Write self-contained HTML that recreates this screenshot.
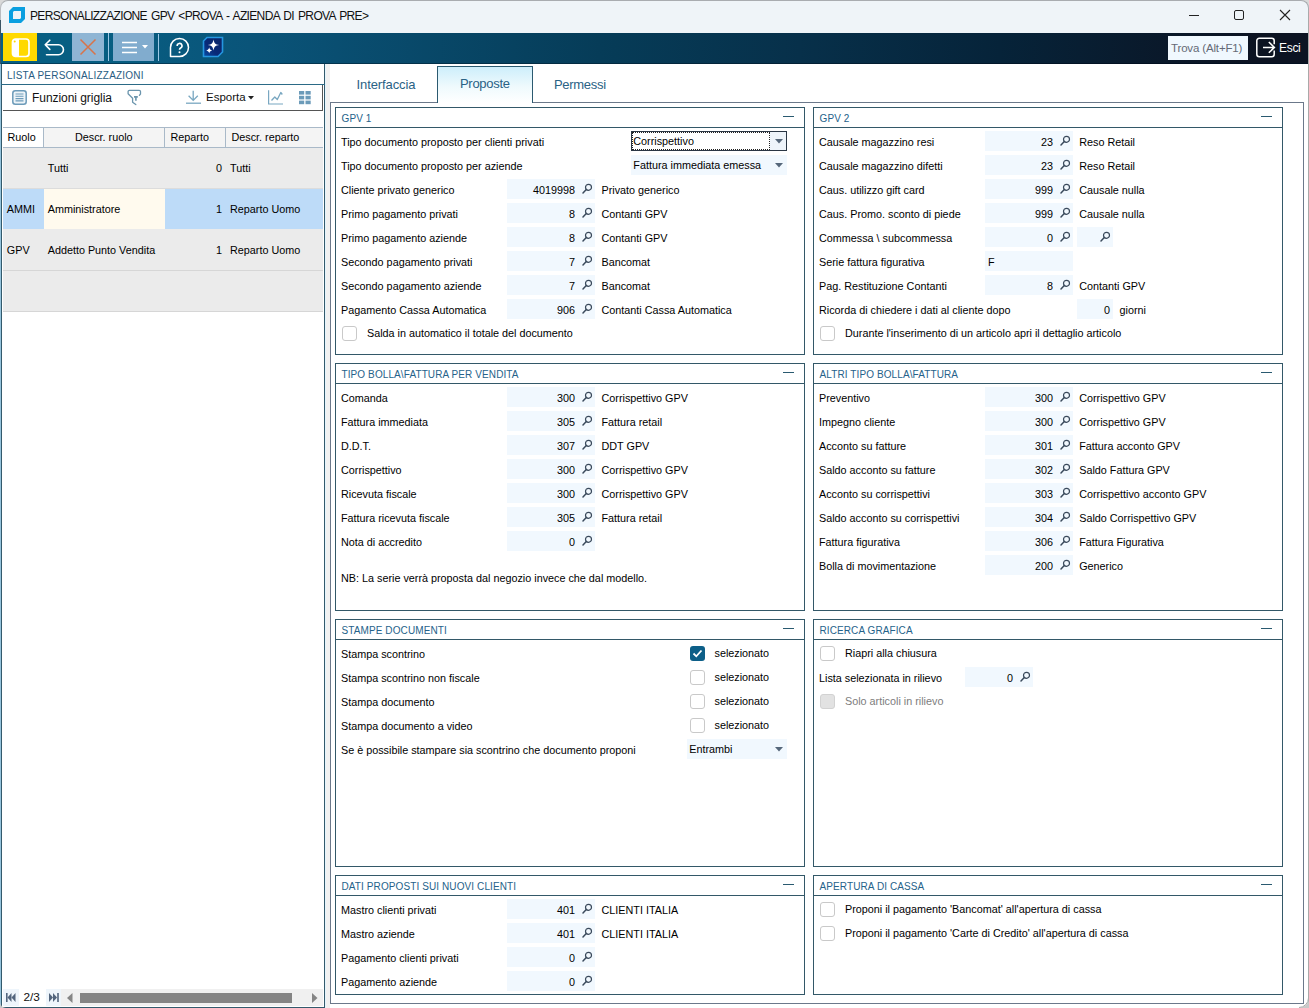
<!DOCTYPE html><html><head><meta charset="utf-8"><style>
html,body{margin:0;padding:0;}
body{width:1309px;height:1008px;position:relative;overflow:hidden;background:#fff;font-family:"Liberation Sans",sans-serif;}
.a{position:absolute;}
.t{position:absolute;white-space:nowrap;}
svg.a{overflow:visible;}
</style></head><body>
<div class="a" style="left:0px;top:0px;width:1309px;height:12px;background:#d9d9d9;"></div>
<div class="a" style="left:0px;top:0px;width:1309px;height:33px;box-sizing:border-box;background:#eff4f8;border-top:1px solid #a9acb0;border-right:1px solid #a9acb0;border-left:1px solid #b9bcc0;border-radius:8px 8px 0 0;"></div>
<svg class="a" style="left:9px;top:7px;" width="16" height="16" viewBox="0 0 16 16"><path d="M4,0 H16 V12 L12,16 H0 V4 Z M5,4 H12 V11 L11,12 H4 V5 Z" fill="#0a9fe0" fill-rule="evenodd"/></svg>
<div class="t" style="left:30px;top:9.84px;font-size:12px;line-height:12px;color:#111;letter-spacing:-0.65px;word-spacing:1.3px;">PERSONALIZZAZIONE GPV &lt;PROVA - AZIENDA DI PROVA PRE&gt;</div>
<div class="a" style="left:1189px;top:15px;width:10px;height:1px;background:#222;"></div>
<div class="a" style="left:1234px;top:10px;width:10px;height:10px;box-sizing:border-box;border:1px solid #222;border-radius:2px;"></div>
<svg class="a" style="left:1280px;top:10px;" width="10" height="10" viewBox="0 0 10 10"><path d="M0,0 L10,10 M10,0 L0,10" stroke="#222" stroke-width="1.1"/></svg>
<div class="a" style="left:0px;top:33px;width:1309px;height:31px;background:linear-gradient(90deg,#075e82 0px,#075e82 100px,#0a5479 250px,#063c58 600px,#07304a 800px,#062339 1000px,#0c1322 1254px,#0c1322 1309px);"></div>
<div class="a" style="left:0px;top:63px;width:1309px;height:1px;background:linear-gradient(90deg,#04405e 0px,#032a40 600px,#020f20 1150px);"></div>
<div class="a" style="left:3px;top:33px;width:34px;height:28px;background:#ffd900;"></div>
<svg class="a" style="left:11px;top:38px;" width="19" height="20" viewBox="0 0 19 20"><rect x="1.5" y="1" width="16.5" height="17.5" rx="3" fill="none" stroke="#fff" stroke-width="1.7"/><path d="M4,1 H8 V18.5 H4 A2.5,2.5 0 0 1 1.5,16 V3.5 A2.5,2.5 0 0 1 4,1 Z" fill="#fff"/><circle cx="3.7" cy="3.5" r="1" fill="#ffd900"/></svg>
<svg class="a" style="left:44px;top:39px;" width="21" height="18" viewBox="0 0 21 18"><path d="M5.8,1.2 L1.2,5.8 L5.8,10.4 M1.2,5.8 H14.5 A4.95,4.95 0 0 1 14.5,15.7 H2.5" fill="none" stroke="#fff" stroke-width="1.6" stroke-linejoin="round" stroke-linecap="round"/></svg>
<div class="a" style="left:72px;top:33px;width:32px;height:28px;background:#8fb5d4;"></div>
<svg class="a" style="left:80px;top:39px;" width="16" height="16" viewBox="0 0 16 16"><path d="M0.5,0.5 L15.5,15.5 M15.5,0.5 L0.5,15.5" stroke="#d8744a" stroke-width="1.5"/></svg>
<div class="a" style="left:108px;top:33px;width:1px;height:28px;background:#9cc8e6;"></div>
<div class="a" style="left:113px;top:33px;width:41px;height:28px;background:#81acce;"></div>
<svg class="a" style="left:121px;top:41px;" width="17" height="13" viewBox="0 0 17 13"><path d="M1,1.5 H16 M1,6.5 H16 M1,11.5 H16" stroke="#fff" stroke-width="1.4"/></svg>
<svg class="a" style="left:142px;top:45px;" width="6" height="4" viewBox="0 0 6 4"><polygon points="0,0 6,0 3,3.5" fill="#fff"/></svg>
<div class="a" style="left:158px;top:34px;width:1px;height:27px;background:#9cc8e6;"></div>
<svg class="a" style="left:169px;top:37px;" width="21" height="21" viewBox="0 0 21 21"><path d="M1.5,19.5 L1.5,10.5 A9,9 0 1 1 10.5,19.5 Z" fill="none" stroke="#fff" stroke-width="1.5" stroke-linejoin="round"/><path d="M8.2,9 A2.4,2.4 0 1 1 11.6,11 C10.9,11.4 10.5,11.8 10.5,12.8" fill="none" stroke="#fff" stroke-width="1.6"/><circle cx="10.5" cy="15.3" r="1" fill="#fff"/></svg>
<svg class="a" style="left:202px;top:36px;" width="22" height="22" viewBox="0 0 22 22"><defs><linearGradient id="ai" x1="1" y1="0" x2="0" y2="1"><stop offset="0" stop-color="#0b2466"/><stop offset="0.6" stop-color="#082a78"/><stop offset="1" stop-color="#0a4ea6"/></linearGradient></defs><path d="M5,1.5 H20.5 V16 L16,20.5 H1.5 V5 Z" fill="url(#ai)" stroke="#2596e0" stroke-width="1.6"/><path d="M11.5,3.5 C12.2,7.3 13.2,8.3 17.2,9 C13.2,9.7 12.2,10.7 11.5,14.5 C10.8,10.7 9.8,9.7 5.8,9 C9.8,8.3 10.8,7.3 11.5,3.5 Z" fill="#fff"/><path d="M7.2,11.3 C7.6,13.3 8.2,13.8 10.2,14.4 C8.2,15 7.6,15.5 7.2,17.5 C6.8,15.5 6.2,15 4.2,14.4 C6.2,13.8 6.8,13.3 7.2,11.3 Z" fill="#fff"/></svg>
<div class="a" style="left:1168px;top:36px;width:80px;height:24px;background:#f0f8fe;"></div>
<div class="t" style="left:1171px;top:42.67px;font-size:11.5px;line-height:11.5px;color:#656a76;letter-spacing:-0.15px;">Trova (Alt+F1)</div>
<svg class="a" style="left:1256px;top:37px;" width="21" height="21" viewBox="0 0 21 21"><path d="M18.2,7.3 V3.8 A2.5,2.5 0 0 0 15.7,1.3 H3.3 A2.5,2.5 0 0 0 0.8,3.8 V17.2 A2.5,2.5 0 0 0 3.3,19.7 H15.7 A2.5,2.5 0 0 0 18.2,17.2 V13.6" fill="none" stroke="#fff" stroke-width="1.5"/><path d="M7,10.4 H18.4 M12.8,5 L18.4,10.4 L12.8,15.8" fill="none" stroke="#fff" stroke-width="1.5" stroke-linejoin="miter"/></svg>
<div class="t" style="left:1279px;top:41.64px;font-size:12px;line-height:12px;color:#fff;letter-spacing:-0.3px;">Esci</div>
<div class="a" style="left:1px;top:64px;width:324px;height:944px;box-sizing:border-box;border:1px solid #335a6c;border-top:none;background:#fff;"></div>
<div class="t" style="left:7px;top:70.53px;font-size:10px;line-height:10px;color:#285c82;letter-spacing:0.2px;">LISTA PERSONALIZZAZIONI</div>
<div class="a" style="left:1px;top:84px;width:324px;height:1px;background:#2b6a86;"></div>
<div class="a" style="left:3px;top:85px;width:320px;height:26px;box-sizing:border-box;border-right:1px solid #555;border-bottom:1px solid #555;background:#fff;"></div>
<svg class="a" style="left:12px;top:90px;" width="15" height="15" viewBox="0 0 15 15"><rect x="0.8" y="0.8" width="13.4" height="13.4" rx="2.5" fill="#eef4f8" stroke="#6c9bb9" stroke-width="1.5"/><path d="M3.5,4 H11.5 M3.5,6.3 H11.5 M3.5,8.6 H11.5 M3.5,10.9 H11.5" stroke="#6c9bb9" stroke-width="1.1"/></svg>
<div class="t" style="left:32px;top:91.54px;font-size:12px;line-height:12px;color:#111;letter-spacing:-0.05px;">Funzioni griglia</div>
<svg class="a" style="left:122px;top:86px;" width="24" height="22" viewBox="0 0 24 22"><path d="M17.4,9.3 L18.5,8 V5.6 A1.3,1.3 0 0 0 17.2,4.3 H7.4 A1.3,1.3 0 0 0 6.1,5.6 V7.8 L10.6,12.3 V16.2 L13.8,18.5" fill="none" stroke="#6b95ad" stroke-width="1.3" stroke-linejoin="round" stroke-linecap="round"/><path d="M12,10.9 H15.8 M13.9,10.9 V14.8" stroke="#6b95ad" stroke-width="1.6"/></svg>
<svg class="a" style="left:186px;top:90px;" width="16" height="15" viewBox="0 0 16 15"><path d="M7.2,0.8 V10.4 M2.6,5.8 L7.2,10.4 L11.8,5.8" fill="none" stroke="#79a7c1" stroke-width="1.3"/><path d="M0,13.2 H15" stroke="#79a7c1" stroke-width="1.3"/></svg>
<div class="t" style="left:206px;top:91.97px;font-size:11.5px;line-height:11.5px;color:#111;">Esporta</div>
<svg class="a" style="left:248px;top:96px;" width="6" height="4" viewBox="0 0 6 4"><polygon points="0,0 6,0 3,3.5" fill="#222"/></svg>
<svg class="a" style="left:268px;top:90px;" width="16" height="15" viewBox="0 0 16 15"><path d="M0.6,0.3 V14 H15" fill="none" stroke="#79a7c1" stroke-width="1.2"/><path d="M3.5,10.5 L6.8,7 L9.3,9.5 L12.8,2.5 L14.3,4.5" fill="none" stroke="#79a7c1" stroke-width="1.3" stroke-linejoin="round"/></svg>
<svg class="a" style="left:299px;top:91px;" width="13" height="14" viewBox="0 0 13 14"><g fill="#6c9bb9"><rect x="0" y="0" width="5.2" height="3.6"/><rect x="6.5" y="0" width="5.2" height="3.6"/><rect x="0" y="4.8" width="5.2" height="3.6"/><rect x="6.5" y="4.8" width="5.2" height="3.6"/><rect x="0" y="9.6" width="5.2" height="3.6"/><rect x="6.5" y="9.6" width="5.2" height="3.6"/></g></svg>
<div class="a" style="left:3px;top:127px;width:320px;height:1px;background:#a9b9c8;"></div>
<div class="a" style="left:3px;top:128px;width:320px;height:19px;background:#f4f4f4;"></div>
<div class="a" style="left:3px;top:128px;width:40px;height:19px;background:#fff;"></div>
<div class="a" style="left:3px;top:147px;width:320px;height:1px;background:#a9b9c8;"></div>
<div class="a" style="left:43px;top:128px;width:1px;height:19px;background:#a9b9c8;"></div>
<div class="a" style="left:164px;top:128px;width:1px;height:19px;background:#a9b9c8;"></div>
<div class="a" style="left:225px;top:128px;width:1px;height:19px;background:#a9b9c8;"></div>
<div class="t" style="left:7.5px;top:132.26px;font-size:10.8px;line-height:10.8px;color:#000;">Ruolo</div>
<div class="t" style="left:75px;top:132.26px;font-size:10.8px;line-height:10.8px;color:#000;">Descr. ruolo</div>
<div class="t" style="left:170.5px;top:132.26px;font-size:10.8px;line-height:10.8px;color:#000;">Reparto</div>
<div class="t" style="left:231.5px;top:132.26px;font-size:10.8px;line-height:10.8px;color:#000;">Descr. reparto</div>
<div class="a" style="left:3px;top:148px;width:320px;height:163px;background:#ebebeb;"></div>
<div class="a" style="left:3px;top:188px;width:320px;height:1px;background:#dcdcdc;"></div>
<div class="a" style="left:3px;top:189px;width:320px;height:40px;background:#bddbf8;"></div>
<div class="a" style="left:44px;top:189px;width:121px;height:40px;background:#fffaee;"></div>
<div class="a" style="left:3px;top:270px;width:320px;height:1px;background:#d6d6d6;"></div>
<div class="a" style="left:3px;top:311px;width:320px;height:1px;background:#d6d6d6;"></div>
<div class="t" style="left:47.7px;top:163.46px;font-size:10.8px;line-height:10.8px;color:#000;">Tutti</div>
<div class="t" style="right:1087px;top:163.46px;font-size:10.8px;line-height:10.8px;color:#000;">0</div>
<div class="t" style="left:230px;top:163.46px;font-size:10.8px;line-height:10.8px;color:#000;">Tutti</div>
<div class="t" style="left:6.8px;top:204.46px;font-size:10.8px;line-height:10.8px;color:#000;">AMMI</div>
<div class="t" style="left:47.7px;top:204.46px;font-size:10.8px;line-height:10.8px;color:#000;">Amministratore</div>
<div class="t" style="right:1087px;top:204.46px;font-size:10.8px;line-height:10.8px;color:#000;">1</div>
<div class="t" style="left:230px;top:204.46px;font-size:10.8px;line-height:10.8px;color:#000;">Reparto Uomo</div>
<div class="t" style="left:6.8px;top:245.46px;font-size:10.8px;line-height:10.8px;color:#000;">GPV</div>
<div class="t" style="left:47.7px;top:245.46px;font-size:10.8px;line-height:10.8px;color:#000;">Addetto Punto Vendita</div>
<div class="t" style="right:1087px;top:245.46px;font-size:10.8px;line-height:10.8px;color:#000;">1</div>
<div class="t" style="left:230px;top:245.46px;font-size:10.8px;line-height:10.8px;color:#000;">Reparto Uomo</div>
<div class="a" style="left:3px;top:989px;width:16px;height:17px;background:#eef5fb;"></div>
<svg class="a" style="left:6px;top:993px;" width="10" height="9" viewBox="0 0 10 9"><rect x="0" y="0" width="1.6" height="9" fill="#53657d"/><polygon points="5.5,0 1.5,4.5 5.5,9" fill="#53657d"/><polygon points="9.5,0 5.5,4.5 9.5,9" fill="#53657d"/></svg>
<div class="t" style="left:23.5px;top:992.31px;font-size:11.8px;line-height:11.8px;color:#111;">2/3</div>
<div class="a" style="left:46px;top:989px;width:15px;height:17px;background:#eef5fb;"></div>
<svg class="a" style="left:49px;top:993px;" width="10" height="9" viewBox="0 0 10 9"><polygon points="0,0 4,4.5 0,9" fill="#53657d"/><polygon points="4,0 8,4.5 4,9" fill="#53657d"/><rect x="8.2" y="0" width="1.6" height="9" fill="#53657d"/></svg>
<div class="a" style="left:61px;top:989px;width:262px;height:17px;background:#f0f0f0;"></div>
<svg class="a" style="left:67px;top:993px;" width="6" height="10" viewBox="0 0 6 10"><polygon points="5.5,0 0,5 5.5,10" fill="#858585"/></svg>
<div class="a" style="left:80px;top:993px;width:212px;height:10px;background:#848484;"></div>
<svg class="a" style="left:312px;top:993px;" width="6" height="10" viewBox="0 0 6 10"><polygon points="0,0 5.5,5 0,10" fill="#858585"/></svg>
<div class="a" style="left:1px;top:1007px;width:324px;height:1px;background:#335a6c;"></div>
<div class="a" style="left:325px;top:64px;width:5px;height:944px;background:#f1f1f1;"></div>
<div class="a" style="left:325px;top:64px;width:1px;height:944px;background:#e4f4fc;"></div>
<div class="a" style="left:330px;top:102px;width:974px;height:902px;box-sizing:border-box;border:1px solid #6b788a;background:#fff;"></div>
<div class="t" style="left:356.5px;top:78.00px;font-size:13px;line-height:13px;color:#2a6285;letter-spacing:-0.1px;">Interfaccia</div>
<div class="a" style="left:437px;top:66px;width:96px;height:37px;box-sizing:border-box;border:1px solid #2b5a70;border-bottom:none;background:linear-gradient(180deg,#cdeefb 0%,#effafd 55%,#fff 100%);"></div>
<div class="t" style="left:460px;top:76.70px;font-size:13px;line-height:13px;color:#2a6285;letter-spacing:-0.3px;">Proposte</div>
<div class="t" style="left:554px;top:78.00px;font-size:13px;line-height:13px;color:#2a6285;letter-spacing:-0.3px;">Permessi</div>
<div class="a" style="left:335px;top:107px;width:470px;height:248px;box-sizing:border-box;border:1px solid #335868;background:#fff;"></div>
<div class="a" style="left:335px;top:127px;width:470px;height:1px;background:#335868;"></div>
<div class="t" style="left:341.5px;top:114.33px;font-size:10px;line-height:10px;color:#25628a;letter-spacing:0.1px;">GPV 1</div>
<div class="a" style="left:783px;top:116px;width:11px;height:1.3px;background:#2a5a70;"></div>
<div class="t" style="left:341px;top:137.06px;font-size:10.8px;line-height:10.8px;color:#000;">Tipo documento proposto per clienti privati</div>
<div class="a" style="left:631px;top:131px;width:156px;height:20px;box-sizing:border-box;border:1px solid #2a3644;background:#fff;"></div>
<div class="a" style="left:770px;top:132px;width:16px;height:18px;background:#eef4fa;"></div>
<div class="a" style="left:632px;top:132px;width:138px;height:18px;box-sizing:border-box;border:1px dotted #222;"></div>
<svg class="a" style="left:775px;top:139px;" width="8" height="5" viewBox="0 0 8 5"><polygon points="0,0 8,0 4,4.5" fill="#56677a"/></svg>
<div class="t" style="left:633.3px;top:135.66px;font-size:10.8px;line-height:10.8px;color:#000;">Corrispettivo</div>
<div class="t" style="left:341px;top:161.06px;font-size:10.8px;line-height:10.8px;color:#000;">Tipo documento proposto per aziende</div>
<div class="a" style="left:631px;top:155px;width:156px;height:20px;background:#f1f8fe;"></div>
<svg class="a" style="left:775px;top:163px;" width="8" height="5" viewBox="0 0 8 5"><polygon points="0,0 8,0 4,4.5" fill="#56677a"/></svg>
<div class="t" style="left:633.3px;top:159.66px;font-size:10.8px;line-height:10.8px;color:#000;">Fattura immediata emessa</div>
<div class="t" style="left:341px;top:185.06px;font-size:10.8px;line-height:10.8px;color:#000;">Cliente privato generico</div>
<div class="a" style="left:507px;top:179px;width:88px;height:20px;background:#f1f8fe;"></div>
<svg class="a" style="left:582px;top:183px;" width="11" height="11" viewBox="0 0 11 11"><circle cx="6.5" cy="4.3" r="3.0" fill="none" stroke="#3a4a5c" stroke-width="1.2"/><line x1="4.3" y1="6.6" x2="1" y2="10" stroke="#3a4a5c" stroke-width="1.5" stroke-linecap="round"/></svg>
<div class="t" style="right:734px;top:185.06px;font-size:10.8px;line-height:10.8px;color:#000;">4019998</div>
<div class="t" style="left:601.5px;top:185.06px;font-size:10.8px;line-height:10.8px;color:#000;">Privato generico</div>
<div class="t" style="left:341px;top:209.06px;font-size:10.8px;line-height:10.8px;color:#000;">Primo pagamento privati</div>
<div class="a" style="left:507px;top:203px;width:88px;height:20px;background:#f1f8fe;"></div>
<svg class="a" style="left:582px;top:207px;" width="11" height="11" viewBox="0 0 11 11"><circle cx="6.5" cy="4.3" r="3.0" fill="none" stroke="#3a4a5c" stroke-width="1.2"/><line x1="4.3" y1="6.6" x2="1" y2="10" stroke="#3a4a5c" stroke-width="1.5" stroke-linecap="round"/></svg>
<div class="t" style="right:734px;top:209.06px;font-size:10.8px;line-height:10.8px;color:#000;">8</div>
<div class="t" style="left:601.5px;top:209.06px;font-size:10.8px;line-height:10.8px;color:#000;">Contanti GPV</div>
<div class="t" style="left:341px;top:233.06px;font-size:10.8px;line-height:10.8px;color:#000;">Primo pagamento aziende</div>
<div class="a" style="left:507px;top:227px;width:88px;height:20px;background:#f1f8fe;"></div>
<svg class="a" style="left:582px;top:231px;" width="11" height="11" viewBox="0 0 11 11"><circle cx="6.5" cy="4.3" r="3.0" fill="none" stroke="#3a4a5c" stroke-width="1.2"/><line x1="4.3" y1="6.6" x2="1" y2="10" stroke="#3a4a5c" stroke-width="1.5" stroke-linecap="round"/></svg>
<div class="t" style="right:734px;top:233.06px;font-size:10.8px;line-height:10.8px;color:#000;">8</div>
<div class="t" style="left:601.5px;top:233.06px;font-size:10.8px;line-height:10.8px;color:#000;">Contanti GPV</div>
<div class="t" style="left:341px;top:257.06px;font-size:10.8px;line-height:10.8px;color:#000;">Secondo pagamento privati</div>
<div class="a" style="left:507px;top:251px;width:88px;height:20px;background:#f1f8fe;"></div>
<svg class="a" style="left:582px;top:255px;" width="11" height="11" viewBox="0 0 11 11"><circle cx="6.5" cy="4.3" r="3.0" fill="none" stroke="#3a4a5c" stroke-width="1.2"/><line x1="4.3" y1="6.6" x2="1" y2="10" stroke="#3a4a5c" stroke-width="1.5" stroke-linecap="round"/></svg>
<div class="t" style="right:734px;top:257.06px;font-size:10.8px;line-height:10.8px;color:#000;">7</div>
<div class="t" style="left:601.5px;top:257.06px;font-size:10.8px;line-height:10.8px;color:#000;">Bancomat</div>
<div class="t" style="left:341px;top:281.06px;font-size:10.8px;line-height:10.8px;color:#000;">Secondo pagamento aziende</div>
<div class="a" style="left:507px;top:275px;width:88px;height:20px;background:#f1f8fe;"></div>
<svg class="a" style="left:582px;top:279px;" width="11" height="11" viewBox="0 0 11 11"><circle cx="6.5" cy="4.3" r="3.0" fill="none" stroke="#3a4a5c" stroke-width="1.2"/><line x1="4.3" y1="6.6" x2="1" y2="10" stroke="#3a4a5c" stroke-width="1.5" stroke-linecap="round"/></svg>
<div class="t" style="right:734px;top:281.06px;font-size:10.8px;line-height:10.8px;color:#000;">7</div>
<div class="t" style="left:601.5px;top:281.06px;font-size:10.8px;line-height:10.8px;color:#000;">Bancomat</div>
<div class="t" style="left:341px;top:305.06px;font-size:10.8px;line-height:10.8px;color:#000;">Pagamento Cassa Automatica</div>
<div class="a" style="left:507px;top:299px;width:88px;height:20px;background:#f1f8fe;"></div>
<svg class="a" style="left:582px;top:303px;" width="11" height="11" viewBox="0 0 11 11"><circle cx="6.5" cy="4.3" r="3.0" fill="none" stroke="#3a4a5c" stroke-width="1.2"/><line x1="4.3" y1="6.6" x2="1" y2="10" stroke="#3a4a5c" stroke-width="1.5" stroke-linecap="round"/></svg>
<div class="t" style="right:734px;top:305.06px;font-size:10.8px;line-height:10.8px;color:#000;">906</div>
<div class="t" style="left:601.5px;top:305.06px;font-size:10.8px;line-height:10.8px;color:#000;">Contanti Cassa Automatica</div>
<div class="a" style="left:342px;top:326px;width:15px;height:15px;box-sizing:border-box;border:1.6px solid #c9c9c9;border-radius:3px;background:#fff;"></div>
<div class="t" style="left:367px;top:328.46px;font-size:10.8px;line-height:10.8px;color:#000;">Salda in automatico il totale del documento</div>
<div class="a" style="left:813px;top:107px;width:470px;height:248px;box-sizing:border-box;border:1px solid #335868;background:#fff;"></div>
<div class="a" style="left:813px;top:127px;width:470px;height:1px;background:#335868;"></div>
<div class="t" style="left:819.5px;top:114.33px;font-size:10px;line-height:10px;color:#25628a;letter-spacing:0.1px;">GPV 2</div>
<div class="a" style="left:1261px;top:116px;width:11px;height:1.3px;background:#2a5a70;"></div>
<div class="t" style="left:819px;top:137.06px;font-size:10.8px;line-height:10.8px;color:#000;">Causale magazzino resi</div>
<div class="a" style="left:985px;top:131px;width:88px;height:20px;background:#f1f8fe;"></div>
<svg class="a" style="left:1060px;top:135px;" width="11" height="11" viewBox="0 0 11 11"><circle cx="6.5" cy="4.3" r="3.0" fill="none" stroke="#3a4a5c" stroke-width="1.2"/><line x1="4.3" y1="6.6" x2="1" y2="10" stroke="#3a4a5c" stroke-width="1.5" stroke-linecap="round"/></svg>
<div class="t" style="right:256px;top:137.06px;font-size:10.8px;line-height:10.8px;color:#000;">23</div>
<div class="t" style="left:1079.2px;top:137.06px;font-size:10.8px;line-height:10.8px;color:#000;">Reso Retail</div>
<div class="t" style="left:819px;top:161.06px;font-size:10.8px;line-height:10.8px;color:#000;">Causale magazzino difetti</div>
<div class="a" style="left:985px;top:155px;width:88px;height:20px;background:#f1f8fe;"></div>
<svg class="a" style="left:1060px;top:159px;" width="11" height="11" viewBox="0 0 11 11"><circle cx="6.5" cy="4.3" r="3.0" fill="none" stroke="#3a4a5c" stroke-width="1.2"/><line x1="4.3" y1="6.6" x2="1" y2="10" stroke="#3a4a5c" stroke-width="1.5" stroke-linecap="round"/></svg>
<div class="t" style="right:256px;top:161.06px;font-size:10.8px;line-height:10.8px;color:#000;">23</div>
<div class="t" style="left:1079.2px;top:161.06px;font-size:10.8px;line-height:10.8px;color:#000;">Reso Retail</div>
<div class="t" style="left:819px;top:185.06px;font-size:10.8px;line-height:10.8px;color:#000;">Caus. utilizzo gift card</div>
<div class="a" style="left:985px;top:179px;width:88px;height:20px;background:#f1f8fe;"></div>
<svg class="a" style="left:1060px;top:183px;" width="11" height="11" viewBox="0 0 11 11"><circle cx="6.5" cy="4.3" r="3.0" fill="none" stroke="#3a4a5c" stroke-width="1.2"/><line x1="4.3" y1="6.6" x2="1" y2="10" stroke="#3a4a5c" stroke-width="1.5" stroke-linecap="round"/></svg>
<div class="t" style="right:256px;top:185.06px;font-size:10.8px;line-height:10.8px;color:#000;">999</div>
<div class="t" style="left:1079.2px;top:185.06px;font-size:10.8px;line-height:10.8px;color:#000;">Causale nulla</div>
<div class="t" style="left:819px;top:209.06px;font-size:10.8px;line-height:10.8px;color:#000;">Caus. Promo. sconto di piede</div>
<div class="a" style="left:985px;top:203px;width:88px;height:20px;background:#f1f8fe;"></div>
<svg class="a" style="left:1060px;top:207px;" width="11" height="11" viewBox="0 0 11 11"><circle cx="6.5" cy="4.3" r="3.0" fill="none" stroke="#3a4a5c" stroke-width="1.2"/><line x1="4.3" y1="6.6" x2="1" y2="10" stroke="#3a4a5c" stroke-width="1.5" stroke-linecap="round"/></svg>
<div class="t" style="right:256px;top:209.06px;font-size:10.8px;line-height:10.8px;color:#000;">999</div>
<div class="t" style="left:1079.2px;top:209.06px;font-size:10.8px;line-height:10.8px;color:#000;">Causale nulla</div>
<div class="t" style="left:819px;top:233.06px;font-size:10.8px;line-height:10.8px;color:#000;">Commessa \ subcommessa</div>
<div class="a" style="left:985px;top:227px;width:88px;height:20px;background:#f1f8fe;"></div>
<svg class="a" style="left:1060px;top:231px;" width="11" height="11" viewBox="0 0 11 11"><circle cx="6.5" cy="4.3" r="3.0" fill="none" stroke="#3a4a5c" stroke-width="1.2"/><line x1="4.3" y1="6.6" x2="1" y2="10" stroke="#3a4a5c" stroke-width="1.5" stroke-linecap="round"/></svg>
<div class="t" style="right:256px;top:233.06px;font-size:10.8px;line-height:10.8px;color:#000;">0</div>
<div class="a" style="left:1077px;top:227px;width:36px;height:20px;background:#f1f8fe;"></div>
<svg class="a" style="left:1100px;top:231px;" width="11" height="11" viewBox="0 0 11 11"><circle cx="6.5" cy="4.3" r="3.0" fill="none" stroke="#3a4a5c" stroke-width="1.2"/><line x1="4.3" y1="6.6" x2="1" y2="10" stroke="#3a4a5c" stroke-width="1.5" stroke-linecap="round"/></svg>
<div class="t" style="left:819px;top:257.06px;font-size:10.8px;line-height:10.8px;color:#000;">Serie fattura figurativa</div>
<div class="a" style="left:985px;top:251px;width:88px;height:20px;background:#f1f8fe;"></div>
<div class="t" style="left:988px;top:257.06px;font-size:10.8px;line-height:10.8px;color:#000;">F</div>
<div class="t" style="left:819px;top:281.06px;font-size:10.8px;line-height:10.8px;color:#000;">Pag. Restituzione Contanti</div>
<div class="a" style="left:985px;top:275px;width:88px;height:20px;background:#f1f8fe;"></div>
<svg class="a" style="left:1060px;top:279px;" width="11" height="11" viewBox="0 0 11 11"><circle cx="6.5" cy="4.3" r="3.0" fill="none" stroke="#3a4a5c" stroke-width="1.2"/><line x1="4.3" y1="6.6" x2="1" y2="10" stroke="#3a4a5c" stroke-width="1.5" stroke-linecap="round"/></svg>
<div class="t" style="right:256px;top:281.06px;font-size:10.8px;line-height:10.8px;color:#000;">8</div>
<div class="t" style="left:1079.2px;top:281.06px;font-size:10.8px;line-height:10.8px;color:#000;">Contanti GPV</div>
<div class="t" style="left:819px;top:305.06px;font-size:10.8px;line-height:10.8px;color:#000;">Ricorda di chiedere i dati al cliente dopo</div>
<div class="a" style="left:1077px;top:299px;width:36px;height:20px;background:#f1f8fe;"></div>
<div class="t" style="right:199px;top:305.06px;font-size:10.8px;line-height:10.8px;color:#000;">0</div>
<div class="t" style="left:1119.5px;top:305.06px;font-size:10.8px;line-height:10.8px;color:#000;">giorni</div>
<div class="a" style="left:820px;top:326px;width:15px;height:15px;box-sizing:border-box;border:1.6px solid #c9c9c9;border-radius:3px;background:#fff;"></div>
<div class="t" style="left:845px;top:328.46px;font-size:10.8px;line-height:10.8px;color:#000;">Durante l'inserimento di un articolo apri il dettaglio articolo</div>
<div class="a" style="left:335px;top:363px;width:470px;height:248px;box-sizing:border-box;border:1px solid #335868;background:#fff;"></div>
<div class="a" style="left:335px;top:383px;width:470px;height:1px;background:#335868;"></div>
<div class="t" style="left:341.5px;top:370.34px;font-size:10px;line-height:10px;color:#25628a;letter-spacing:0.1px;">TIPO BOLLA\FATTURA PER VENDITA</div>
<div class="a" style="left:783px;top:372px;width:11px;height:1.3px;background:#2a5a70;"></div>
<div class="t" style="left:341px;top:393.06px;font-size:10.8px;line-height:10.8px;color:#000;">Comanda</div>
<div class="a" style="left:507px;top:387px;width:88px;height:20px;background:#f1f8fe;"></div>
<svg class="a" style="left:582px;top:391px;" width="11" height="11" viewBox="0 0 11 11"><circle cx="6.5" cy="4.3" r="3.0" fill="none" stroke="#3a4a5c" stroke-width="1.2"/><line x1="4.3" y1="6.6" x2="1" y2="10" stroke="#3a4a5c" stroke-width="1.5" stroke-linecap="round"/></svg>
<div class="t" style="right:734px;top:393.06px;font-size:10.8px;line-height:10.8px;color:#000;">300</div>
<div class="t" style="left:601.5px;top:393.06px;font-size:10.8px;line-height:10.8px;color:#000;">Corrispettivo GPV</div>
<div class="t" style="left:341px;top:417.06px;font-size:10.8px;line-height:10.8px;color:#000;">Fattura immediata</div>
<div class="a" style="left:507px;top:411px;width:88px;height:20px;background:#f1f8fe;"></div>
<svg class="a" style="left:582px;top:415px;" width="11" height="11" viewBox="0 0 11 11"><circle cx="6.5" cy="4.3" r="3.0" fill="none" stroke="#3a4a5c" stroke-width="1.2"/><line x1="4.3" y1="6.6" x2="1" y2="10" stroke="#3a4a5c" stroke-width="1.5" stroke-linecap="round"/></svg>
<div class="t" style="right:734px;top:417.06px;font-size:10.8px;line-height:10.8px;color:#000;">305</div>
<div class="t" style="left:601.5px;top:417.06px;font-size:10.8px;line-height:10.8px;color:#000;">Fattura retail</div>
<div class="t" style="left:341px;top:441.06px;font-size:10.8px;line-height:10.8px;color:#000;">D.D.T.</div>
<div class="a" style="left:507px;top:435px;width:88px;height:20px;background:#f1f8fe;"></div>
<svg class="a" style="left:582px;top:439px;" width="11" height="11" viewBox="0 0 11 11"><circle cx="6.5" cy="4.3" r="3.0" fill="none" stroke="#3a4a5c" stroke-width="1.2"/><line x1="4.3" y1="6.6" x2="1" y2="10" stroke="#3a4a5c" stroke-width="1.5" stroke-linecap="round"/></svg>
<div class="t" style="right:734px;top:441.06px;font-size:10.8px;line-height:10.8px;color:#000;">307</div>
<div class="t" style="left:601.5px;top:441.06px;font-size:10.8px;line-height:10.8px;color:#000;">DDT GPV</div>
<div class="t" style="left:341px;top:465.06px;font-size:10.8px;line-height:10.8px;color:#000;">Corrispettivo</div>
<div class="a" style="left:507px;top:459px;width:88px;height:20px;background:#f1f8fe;"></div>
<svg class="a" style="left:582px;top:463px;" width="11" height="11" viewBox="0 0 11 11"><circle cx="6.5" cy="4.3" r="3.0" fill="none" stroke="#3a4a5c" stroke-width="1.2"/><line x1="4.3" y1="6.6" x2="1" y2="10" stroke="#3a4a5c" stroke-width="1.5" stroke-linecap="round"/></svg>
<div class="t" style="right:734px;top:465.06px;font-size:10.8px;line-height:10.8px;color:#000;">300</div>
<div class="t" style="left:601.5px;top:465.06px;font-size:10.8px;line-height:10.8px;color:#000;">Corrispettivo GPV</div>
<div class="t" style="left:341px;top:489.06px;font-size:10.8px;line-height:10.8px;color:#000;">Ricevuta fiscale</div>
<div class="a" style="left:507px;top:483px;width:88px;height:20px;background:#f1f8fe;"></div>
<svg class="a" style="left:582px;top:487px;" width="11" height="11" viewBox="0 0 11 11"><circle cx="6.5" cy="4.3" r="3.0" fill="none" stroke="#3a4a5c" stroke-width="1.2"/><line x1="4.3" y1="6.6" x2="1" y2="10" stroke="#3a4a5c" stroke-width="1.5" stroke-linecap="round"/></svg>
<div class="t" style="right:734px;top:489.06px;font-size:10.8px;line-height:10.8px;color:#000;">300</div>
<div class="t" style="left:601.5px;top:489.06px;font-size:10.8px;line-height:10.8px;color:#000;">Corrispettivo GPV</div>
<div class="t" style="left:341px;top:513.06px;font-size:10.8px;line-height:10.8px;color:#000;">Fattura ricevuta fiscale</div>
<div class="a" style="left:507px;top:507px;width:88px;height:20px;background:#f1f8fe;"></div>
<svg class="a" style="left:582px;top:511px;" width="11" height="11" viewBox="0 0 11 11"><circle cx="6.5" cy="4.3" r="3.0" fill="none" stroke="#3a4a5c" stroke-width="1.2"/><line x1="4.3" y1="6.6" x2="1" y2="10" stroke="#3a4a5c" stroke-width="1.5" stroke-linecap="round"/></svg>
<div class="t" style="right:734px;top:513.06px;font-size:10.8px;line-height:10.8px;color:#000;">305</div>
<div class="t" style="left:601.5px;top:513.06px;font-size:10.8px;line-height:10.8px;color:#000;">Fattura retail</div>
<div class="t" style="left:341px;top:537.06px;font-size:10.8px;line-height:10.8px;color:#000;">Nota di accredito</div>
<div class="a" style="left:507px;top:531px;width:88px;height:20px;background:#f1f8fe;"></div>
<svg class="a" style="left:582px;top:535px;" width="11" height="11" viewBox="0 0 11 11"><circle cx="6.5" cy="4.3" r="3.0" fill="none" stroke="#3a4a5c" stroke-width="1.2"/><line x1="4.3" y1="6.6" x2="1" y2="10" stroke="#3a4a5c" stroke-width="1.5" stroke-linecap="round"/></svg>
<div class="t" style="right:734px;top:537.06px;font-size:10.8px;line-height:10.8px;color:#000;">0</div>
<div class="t" style="left:341px;top:573.46px;font-size:10.8px;line-height:10.8px;color:#000;">NB: La serie verrà proposta dal negozio invece che dal modello.</div>
<div class="a" style="left:813px;top:363px;width:470px;height:248px;box-sizing:border-box;border:1px solid #335868;background:#fff;"></div>
<div class="a" style="left:813px;top:383px;width:470px;height:1px;background:#335868;"></div>
<div class="t" style="left:819.5px;top:370.34px;font-size:10px;line-height:10px;color:#25628a;letter-spacing:0.1px;">ALTRI TIPO BOLLA\FATTURA</div>
<div class="a" style="left:1261px;top:372px;width:11px;height:1.3px;background:#2a5a70;"></div>
<div class="t" style="left:819px;top:393.06px;font-size:10.8px;line-height:10.8px;color:#000;">Preventivo</div>
<div class="a" style="left:985px;top:387px;width:88px;height:20px;background:#f1f8fe;"></div>
<svg class="a" style="left:1060px;top:391px;" width="11" height="11" viewBox="0 0 11 11"><circle cx="6.5" cy="4.3" r="3.0" fill="none" stroke="#3a4a5c" stroke-width="1.2"/><line x1="4.3" y1="6.6" x2="1" y2="10" stroke="#3a4a5c" stroke-width="1.5" stroke-linecap="round"/></svg>
<div class="t" style="right:256px;top:393.06px;font-size:10.8px;line-height:10.8px;color:#000;">300</div>
<div class="t" style="left:1079.2px;top:393.06px;font-size:10.8px;line-height:10.8px;color:#000;">Corrispettivo GPV</div>
<div class="t" style="left:819px;top:417.06px;font-size:10.8px;line-height:10.8px;color:#000;">Impegno cliente</div>
<div class="a" style="left:985px;top:411px;width:88px;height:20px;background:#f1f8fe;"></div>
<svg class="a" style="left:1060px;top:415px;" width="11" height="11" viewBox="0 0 11 11"><circle cx="6.5" cy="4.3" r="3.0" fill="none" stroke="#3a4a5c" stroke-width="1.2"/><line x1="4.3" y1="6.6" x2="1" y2="10" stroke="#3a4a5c" stroke-width="1.5" stroke-linecap="round"/></svg>
<div class="t" style="right:256px;top:417.06px;font-size:10.8px;line-height:10.8px;color:#000;">300</div>
<div class="t" style="left:1079.2px;top:417.06px;font-size:10.8px;line-height:10.8px;color:#000;">Corrispettivo GPV</div>
<div class="t" style="left:819px;top:441.06px;font-size:10.8px;line-height:10.8px;color:#000;">Acconto su fatture</div>
<div class="a" style="left:985px;top:435px;width:88px;height:20px;background:#f1f8fe;"></div>
<svg class="a" style="left:1060px;top:439px;" width="11" height="11" viewBox="0 0 11 11"><circle cx="6.5" cy="4.3" r="3.0" fill="none" stroke="#3a4a5c" stroke-width="1.2"/><line x1="4.3" y1="6.6" x2="1" y2="10" stroke="#3a4a5c" stroke-width="1.5" stroke-linecap="round"/></svg>
<div class="t" style="right:256px;top:441.06px;font-size:10.8px;line-height:10.8px;color:#000;">301</div>
<div class="t" style="left:1079.2px;top:441.06px;font-size:10.8px;line-height:10.8px;color:#000;">Fattura acconto GPV</div>
<div class="t" style="left:819px;top:465.06px;font-size:10.8px;line-height:10.8px;color:#000;">Saldo acconto su fatture</div>
<div class="a" style="left:985px;top:459px;width:88px;height:20px;background:#f1f8fe;"></div>
<svg class="a" style="left:1060px;top:463px;" width="11" height="11" viewBox="0 0 11 11"><circle cx="6.5" cy="4.3" r="3.0" fill="none" stroke="#3a4a5c" stroke-width="1.2"/><line x1="4.3" y1="6.6" x2="1" y2="10" stroke="#3a4a5c" stroke-width="1.5" stroke-linecap="round"/></svg>
<div class="t" style="right:256px;top:465.06px;font-size:10.8px;line-height:10.8px;color:#000;">302</div>
<div class="t" style="left:1079.2px;top:465.06px;font-size:10.8px;line-height:10.8px;color:#000;">Saldo Fattura GPV</div>
<div class="t" style="left:819px;top:489.06px;font-size:10.8px;line-height:10.8px;color:#000;">Acconto su corrispettivi</div>
<div class="a" style="left:985px;top:483px;width:88px;height:20px;background:#f1f8fe;"></div>
<svg class="a" style="left:1060px;top:487px;" width="11" height="11" viewBox="0 0 11 11"><circle cx="6.5" cy="4.3" r="3.0" fill="none" stroke="#3a4a5c" stroke-width="1.2"/><line x1="4.3" y1="6.6" x2="1" y2="10" stroke="#3a4a5c" stroke-width="1.5" stroke-linecap="round"/></svg>
<div class="t" style="right:256px;top:489.06px;font-size:10.8px;line-height:10.8px;color:#000;">303</div>
<div class="t" style="left:1079.2px;top:489.06px;font-size:10.8px;line-height:10.8px;color:#000;">Corrispettivo acconto GPV</div>
<div class="t" style="left:819px;top:513.06px;font-size:10.8px;line-height:10.8px;color:#000;">Saldo acconto su corrispettivi</div>
<div class="a" style="left:985px;top:507px;width:88px;height:20px;background:#f1f8fe;"></div>
<svg class="a" style="left:1060px;top:511px;" width="11" height="11" viewBox="0 0 11 11"><circle cx="6.5" cy="4.3" r="3.0" fill="none" stroke="#3a4a5c" stroke-width="1.2"/><line x1="4.3" y1="6.6" x2="1" y2="10" stroke="#3a4a5c" stroke-width="1.5" stroke-linecap="round"/></svg>
<div class="t" style="right:256px;top:513.06px;font-size:10.8px;line-height:10.8px;color:#000;">304</div>
<div class="t" style="left:1079.2px;top:513.06px;font-size:10.8px;line-height:10.8px;color:#000;">Saldo Corrispettivo GPV</div>
<div class="t" style="left:819px;top:537.06px;font-size:10.8px;line-height:10.8px;color:#000;">Fattura figurativa</div>
<div class="a" style="left:985px;top:531px;width:88px;height:20px;background:#f1f8fe;"></div>
<svg class="a" style="left:1060px;top:535px;" width="11" height="11" viewBox="0 0 11 11"><circle cx="6.5" cy="4.3" r="3.0" fill="none" stroke="#3a4a5c" stroke-width="1.2"/><line x1="4.3" y1="6.6" x2="1" y2="10" stroke="#3a4a5c" stroke-width="1.5" stroke-linecap="round"/></svg>
<div class="t" style="right:256px;top:537.06px;font-size:10.8px;line-height:10.8px;color:#000;">306</div>
<div class="t" style="left:1079.2px;top:537.06px;font-size:10.8px;line-height:10.8px;color:#000;">Fattura Figurativa</div>
<div class="t" style="left:819px;top:561.06px;font-size:10.8px;line-height:10.8px;color:#000;">Bolla di movimentazione</div>
<div class="a" style="left:985px;top:555px;width:88px;height:20px;background:#f1f8fe;"></div>
<svg class="a" style="left:1060px;top:559px;" width="11" height="11" viewBox="0 0 11 11"><circle cx="6.5" cy="4.3" r="3.0" fill="none" stroke="#3a4a5c" stroke-width="1.2"/><line x1="4.3" y1="6.6" x2="1" y2="10" stroke="#3a4a5c" stroke-width="1.5" stroke-linecap="round"/></svg>
<div class="t" style="right:256px;top:561.06px;font-size:10.8px;line-height:10.8px;color:#000;">200</div>
<div class="t" style="left:1079.2px;top:561.06px;font-size:10.8px;line-height:10.8px;color:#000;">Generico</div>
<div class="a" style="left:335px;top:619px;width:470px;height:248px;box-sizing:border-box;border:1px solid #335868;background:#fff;"></div>
<div class="a" style="left:335px;top:639px;width:470px;height:1px;background:#335868;"></div>
<div class="t" style="left:341.5px;top:626.33px;font-size:10px;line-height:10px;color:#25628a;letter-spacing:0.1px;">STAMPE DOCUMENTI</div>
<div class="a" style="left:783px;top:628px;width:11px;height:1.3px;background:#2a5a70;"></div>
<div class="t" style="left:341px;top:649.06px;font-size:10.8px;line-height:10.8px;color:#000;">Stampa scontrino</div>
<div class="a" style="left:690px;top:646px;width:15px;height:15px;background:#0d5f88;border-radius:3px;"></div>
<svg class="a" style="left:690px;top:646px;" width="15" height="15" viewBox="0 0 15 15"><polyline points="3.5,7.5 6.3,10.3 11.5,4.5" fill="none" stroke="#fff" stroke-width="1.8"/></svg>
<div class="t" style="left:714.5px;top:648.06px;font-size:10.8px;line-height:10.8px;color:#000;">selezionato</div>
<div class="t" style="left:341px;top:673.06px;font-size:10.8px;line-height:10.8px;color:#000;">Stampa scontrino non fiscale</div>
<div class="a" style="left:690px;top:670px;width:15px;height:15px;box-sizing:border-box;border:1.6px solid #c9c9c9;border-radius:3px;background:#fff;"></div>
<div class="t" style="left:714.5px;top:672.06px;font-size:10.8px;line-height:10.8px;color:#000;">selezionato</div>
<div class="t" style="left:341px;top:697.06px;font-size:10.8px;line-height:10.8px;color:#000;">Stampa documento</div>
<div class="a" style="left:690px;top:694px;width:15px;height:15px;box-sizing:border-box;border:1.6px solid #c9c9c9;border-radius:3px;background:#fff;"></div>
<div class="t" style="left:714.5px;top:696.06px;font-size:10.8px;line-height:10.8px;color:#000;">selezionato</div>
<div class="t" style="left:341px;top:721.06px;font-size:10.8px;line-height:10.8px;color:#000;">Stampa documento a video</div>
<div class="a" style="left:690px;top:718px;width:15px;height:15px;box-sizing:border-box;border:1.6px solid #c9c9c9;border-radius:3px;background:#fff;"></div>
<div class="t" style="left:714.5px;top:720.06px;font-size:10.8px;line-height:10.8px;color:#000;">selezionato</div>
<div class="t" style="left:341px;top:745.06px;font-size:10.8px;line-height:10.8px;color:#000;">Se è possibile stampare sia scontrino che documento proponi</div>
<div class="a" style="left:687px;top:739px;width:100px;height:20px;background:#f1f8fe;"></div>
<svg class="a" style="left:775px;top:747px;" width="8" height="5" viewBox="0 0 8 5"><polygon points="0,0 8,0 4,4.5" fill="#56677a"/></svg>
<div class="t" style="left:689.3px;top:743.66px;font-size:10.8px;line-height:10.8px;color:#000;">Entrambi</div>
<div class="a" style="left:813px;top:619px;width:470px;height:248px;box-sizing:border-box;border:1px solid #335868;background:#fff;"></div>
<div class="a" style="left:813px;top:639px;width:470px;height:1px;background:#335868;"></div>
<div class="t" style="left:819.5px;top:626.33px;font-size:10px;line-height:10px;color:#25628a;letter-spacing:0.1px;">RICERCA GRAFICA</div>
<div class="a" style="left:1261px;top:628px;width:11px;height:1.3px;background:#2a5a70;"></div>
<div class="a" style="left:820px;top:646px;width:15px;height:15px;box-sizing:border-box;border:1.6px solid #c9c9c9;border-radius:3px;background:#fff;"></div>
<div class="t" style="left:845px;top:648.46px;font-size:10.8px;line-height:10.8px;color:#000;">Riapri alla chiusura</div>
<div class="t" style="left:819px;top:673.46px;font-size:10.8px;line-height:10.8px;color:#000;">Lista selezionata in rilievo</div>
<div class="a" style="left:965px;top:667px;width:68px;height:20px;background:#f1f8fe;"></div>
<svg class="a" style="left:1020px;top:671px;" width="11" height="11" viewBox="0 0 11 11"><circle cx="6.5" cy="4.3" r="3.0" fill="none" stroke="#3a4a5c" stroke-width="1.2"/><line x1="4.3" y1="6.6" x2="1" y2="10" stroke="#3a4a5c" stroke-width="1.5" stroke-linecap="round"/></svg>
<div class="t" style="right:296px;top:673.06px;font-size:10.8px;line-height:10.8px;color:#000;">0</div>
<div class="a" style="left:820px;top:694px;width:15px;height:15px;box-sizing:border-box;background:#e2e2e2;border:1.6px solid #d2d2d2;border-radius:3px;"></div>
<div class="t" style="left:845px;top:696.46px;font-size:10.8px;line-height:10.8px;color:#7d7d7d;">Solo articoli in rilievo</div>
<div class="a" style="left:335px;top:875px;width:470px;height:120px;box-sizing:border-box;border:1px solid #335868;background:#fff;"></div>
<div class="a" style="left:335px;top:895px;width:470px;height:1px;background:#335868;"></div>
<div class="t" style="left:341.5px;top:882.33px;font-size:10px;line-height:10px;color:#25628a;letter-spacing:0.1px;">DATI PROPOSTI SUI NUOVI CLIENTI</div>
<div class="a" style="left:783px;top:884px;width:11px;height:1.3px;background:#2a5a70;"></div>
<div class="t" style="left:341px;top:905.06px;font-size:10.8px;line-height:10.8px;color:#000;">Mastro clienti privati</div>
<div class="a" style="left:507px;top:899px;width:88px;height:20px;background:#f1f8fe;"></div>
<svg class="a" style="left:582px;top:903px;" width="11" height="11" viewBox="0 0 11 11"><circle cx="6.5" cy="4.3" r="3.0" fill="none" stroke="#3a4a5c" stroke-width="1.2"/><line x1="4.3" y1="6.6" x2="1" y2="10" stroke="#3a4a5c" stroke-width="1.5" stroke-linecap="round"/></svg>
<div class="t" style="right:734px;top:905.06px;font-size:10.8px;line-height:10.8px;color:#000;">401</div>
<div class="t" style="left:601.5px;top:905.06px;font-size:10.8px;line-height:10.8px;color:#000;">CLIENTI ITALIA</div>
<div class="t" style="left:341px;top:929.06px;font-size:10.8px;line-height:10.8px;color:#000;">Mastro aziende</div>
<div class="a" style="left:507px;top:923px;width:88px;height:20px;background:#f1f8fe;"></div>
<svg class="a" style="left:582px;top:927px;" width="11" height="11" viewBox="0 0 11 11"><circle cx="6.5" cy="4.3" r="3.0" fill="none" stroke="#3a4a5c" stroke-width="1.2"/><line x1="4.3" y1="6.6" x2="1" y2="10" stroke="#3a4a5c" stroke-width="1.5" stroke-linecap="round"/></svg>
<div class="t" style="right:734px;top:929.06px;font-size:10.8px;line-height:10.8px;color:#000;">401</div>
<div class="t" style="left:601.5px;top:929.06px;font-size:10.8px;line-height:10.8px;color:#000;">CLIENTI ITALIA</div>
<div class="t" style="left:341px;top:953.06px;font-size:10.8px;line-height:10.8px;color:#000;">Pagamento clienti privati</div>
<div class="a" style="left:507px;top:947px;width:88px;height:20px;background:#f1f8fe;"></div>
<svg class="a" style="left:582px;top:951px;" width="11" height="11" viewBox="0 0 11 11"><circle cx="6.5" cy="4.3" r="3.0" fill="none" stroke="#3a4a5c" stroke-width="1.2"/><line x1="4.3" y1="6.6" x2="1" y2="10" stroke="#3a4a5c" stroke-width="1.5" stroke-linecap="round"/></svg>
<div class="t" style="right:734px;top:953.06px;font-size:10.8px;line-height:10.8px;color:#000;">0</div>
<div class="t" style="left:341px;top:977.06px;font-size:10.8px;line-height:10.8px;color:#000;">Pagamento aziende</div>
<div class="a" style="left:507px;top:971px;width:88px;height:20px;background:#f1f8fe;"></div>
<svg class="a" style="left:582px;top:975px;" width="11" height="11" viewBox="0 0 11 11"><circle cx="6.5" cy="4.3" r="3.0" fill="none" stroke="#3a4a5c" stroke-width="1.2"/><line x1="4.3" y1="6.6" x2="1" y2="10" stroke="#3a4a5c" stroke-width="1.5" stroke-linecap="round"/></svg>
<div class="t" style="right:734px;top:977.06px;font-size:10.8px;line-height:10.8px;color:#000;">0</div>
<div class="a" style="left:813px;top:875px;width:470px;height:120px;box-sizing:border-box;border:1px solid #335868;background:#fff;"></div>
<div class="a" style="left:813px;top:895px;width:470px;height:1px;background:#335868;"></div>
<div class="t" style="left:819.5px;top:882.33px;font-size:10px;line-height:10px;color:#25628a;letter-spacing:0.1px;">APERTURA DI CASSA</div>
<div class="a" style="left:1261px;top:884px;width:11px;height:1.3px;background:#2a5a70;"></div>
<div class="a" style="left:820px;top:902px;width:15px;height:15px;box-sizing:border-box;border:1.6px solid #c9c9c9;border-radius:3px;background:#fff;"></div>
<div class="t" style="left:845px;top:904.46px;font-size:10.8px;line-height:10.8px;color:#000;">Proponi il pagamento 'Bancomat' all'apertura di cassa</div>
<div class="a" style="left:820px;top:926px;width:15px;height:15px;box-sizing:border-box;border:1.6px solid #c9c9c9;border-radius:3px;background:#fff;"></div>
<div class="t" style="left:845px;top:928.46px;font-size:10.8px;line-height:10.8px;color:#000;">Proponi il pagamento 'Carte di Credito' all'apertura di cassa</div>
<div class="a" style="left:0px;top:64px;width:1px;height:944px;background:#95c3dc;"></div>
<div class="a" style="left:0px;top:20px;width:1px;height:44px;background:#3a5464;"></div>
<div class="a" style="left:1308px;top:12px;width:1px;height:996px;background:#a9a9a9;"></div>
<svg class="a" style="left:1299px;top:998px;" width="10" height="10" viewBox="0 0 10 10"><path d="M10,0 V10 H0 A10,10 0 0 0 10,0 Z" fill="#c9c9c9"/><path d="M9.5,0 A9.5,9.5 0 0 1 0,9.5" fill="none" stroke="#a9a9a9" stroke-width="1"/></svg>
<svg class="a" style="left:0px;top:1002px;" width="6" height="6" viewBox="0 0 6 6"><path d="M0,0 V6 H6 A6,6 0 0 1 0,0 Z" fill="#c9c9c9"/></svg>
</body></html>
